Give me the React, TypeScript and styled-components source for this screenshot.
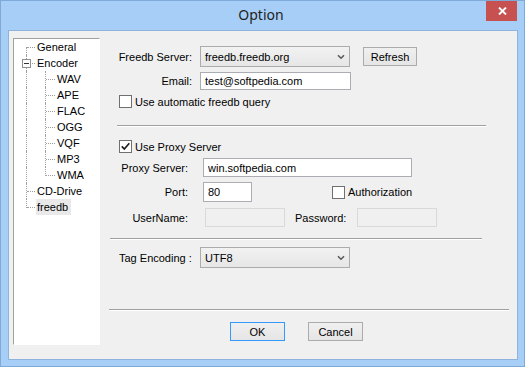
import React from 'react';
import styled, { createGlobalStyle } from 'styled-components';

const GlobalStyle = createGlobalStyle`
  html, body { margin: 0; padding: 0; }
  body {
    font-family: "Liberation Sans", Arial, sans-serif;
    font-size: 11px;
    color: #000;
    background: #fff;
  }
  * { box-sizing: border-box; }
`;

const Window = styled.div`
  width: 525px;
  height: 367px;
  background: #a6cef7;
  border: 1px solid #7faad8;
  display: flex;
  flex-direction: column;
`;

const TitleBar = styled.div`
  height: 29px;
  flex: none;
  display: grid;
  grid-template-columns: 1fr auto 1fr;
  align-items: start;
`;

const Title = styled.div`
  grid-column: 2;
  font-family: "Noto Sans", "Open Sans", sans-serif;
  font-size: 14px;
  line-height: 27px;
  color: #1e1e1e;
  margin-left: -3px;
`;

const CloseButton = styled.div`
  grid-column: 3;
  justify-self: end;
  width: 31px;
  height: 20px;
  margin-right: 7px;
  background: #c75050;
  display: flex;
  align-items: center;
  justify-content: center;
  padding-left: 2px;
`;

const Client = styled.div`
  flex: 1;
  margin: 0 6px 6px 7px;
  background: #f0f0f0;
  border: 1px solid #8fb3dd;
  display: flex;
  align-items: flex-start;
  gap: 9px;
  padding: 7px 8px 0 4px;
`;

/* ---------- Tree ---------- */

const Tree = styled.div`
  width: 87px;
  height: 307px;
  flex: none;
  background: #fff;
  border-top: 1px solid #a0a0a0;
  border-left: 1px solid #a0a0a0;
  border-right: 1px solid #fff;
  border-bottom: 1px solid #fff;
  display: flex;
  flex-direction: column;
`;

const TreeRow = styled.div`
  height: 16px;
  display: flex;
  align-items: center;
`;

type VExtent = 'full' | 'top' | 'bottom';

const Branch = styled.span<{ $w: number; $x: number; $v: VExtent; $h: boolean }>`
  position: relative;
  flex: none;
  width: ${(p) => p.$w}px;
  height: 16px;
  &::before {
    content: '';
    position: absolute;
    left: ${(p) => p.$x}px;
    top: ${(p) => (p.$v === 'bottom' ? '8px' : '0')};
    bottom: ${(p) => (p.$v === 'top' ? '7px' : '0')};
    border-left: 1px dotted #a0a0a0;
  }
  &::after {
    content: '';
    display: ${(p) => (p.$h ? 'block' : 'none')};
    position: absolute;
    left: ${(p) => p.$x + 1}px;
    right: 1px;
    top: 8px;
    border-top: 1px dotted #a0a0a0;
  }
`;

const Expander = styled.span`
  position: absolute;
  z-index: 1;
  left: 8px;
  top: 4px;
  width: 9px;
  height: 9px;
  background: #fff;
  border: 1px solid #919191;
  &::after {
    content: '';
    position: absolute;
    left: 1px;
    top: 3px;
    width: 5px;
    height: 1px;
    background: #333;
  }
`;

const TreeLabel = styled.span<{ $selected?: boolean }>`
  height: 16px;
  line-height: 16px;
  padding: 0 3px 0 1px;
  white-space: nowrap;
  background: ${(p) => (p.$selected ? '#e9e9e9' : 'transparent')};
`;

/* ---------- Right panel ---------- */

const Panel = styled.div`
  flex: 1;
  display: flex;
  flex-direction: column;
  padding-top: 8px;
`;

const FormRow = styled.div<{ $h: number; $mt: number; $pl: number }>`
  display: flex;
  align-items: center;
  height: ${(p) => p.$h}px;
  margin-top: ${(p) => p.$mt}px;
  padding-left: ${(p) => p.$pl}px;
`;

const Label = styled.span<{ $w?: number; $right?: boolean; $ml?: number }>`
  flex: none;
  width: ${(p) => (p.$w ? `${p.$w}px` : 'auto')};
  margin-left: ${(p) => p.$ml ?? 0}px;
  text-align: ${(p) => (p.$right ? 'right' : 'left')};
  white-space: nowrap;
`;

const TextBox = styled.input<{ $w: number; $h: number; $ml: number }>`
  flex: none;
  width: ${(p) => p.$w}px;
  height: ${(p) => p.$h}px;
  margin: 0 0 0 ${(p) => p.$ml}px;
  padding: 0 0 0 4px;
  font: inherit;
  color: #000;
  background: #fff;
  border: 1px solid #abadb3;
  outline: none;
  &:disabled {
    background: #f0f0f0;
    border-color: #d9d9d9;
  }
`;

const Combo = styled.div<{ $w: number; $ml: number }>`
  flex: none;
  width: ${(p) => p.$w}px;
  height: 21px;
  margin-left: ${(p) => p.$ml}px;
  padding: 0 4px 0 4px;
  background: linear-gradient(#f2f2f2, #e6e6e6);
  border: 1px solid #acacac;
  display: flex;
  align-items: center;
  justify-content: space-between;
`;

const Button = styled.button<{ $w: number; $h: number; $ml: number; $default?: boolean }>`
  flex: none;
  width: ${(p) => p.$w}px;
  height: ${(p) => p.$h}px;
  margin: 0 0 0 ${(p) => p.$ml}px;
  padding: 0;
  font: inherit;
  color: #000;
  background: linear-gradient(#f0f0f0, #e5e5e5);
  border: 1px solid ${(p) => (p.$default ? '#3399ff' : '#acacac')};
`;

const CheckLine = styled.label<{ $ml?: number }>`
  display: flex;
  align-items: center;
  gap: 3px;
  margin-left: ${(p) => p.$ml ?? 0}px;
  white-space: nowrap;
`;

const Box = styled.span`
  flex: none;
  width: 13px;
  height: 13px;
  border: 1px solid #707070;
  background: #fff;
  display: flex;
  align-items: center;
  justify-content: center;
`;

const Separator = styled.div<{ $mt: number; $ml: number; $w: number }>`
  flex: none;
  height: 2px;
  width: ${(p) => p.$w}px;
  margin-top: ${(p) => p.$mt}px;
  margin-left: ${(p) => p.$ml}px;
  border-top: 1px solid #a0a0a0;
  border-bottom: 1px solid #ffffff;
`;

const Chevron = () => (
  <svg width="8" height="6" viewBox="0 0 8 6">
    <path d="M1 1.2 L4 4.2 L7 1.2" fill="none" stroke="#5a5a5a" strokeWidth="1.6" />
  </svg>
);

const CheckBox = ({ checked, children, ml }: { checked?: boolean; children: React.ReactNode; ml?: number }) => (
  <CheckLine $ml={ml}>
    <Box>
      {checked && (
        <svg width="11" height="11" viewBox="0 0 11 11">
          <path d="M1.8 5.4 L4.3 8 L9.3 2.2" fill="none" stroke="#1f1f1f" strokeWidth="1.7" />
        </svg>
      )}
    </Box>
    <span>{children}</span>
  </CheckLine>
);

type TreeItem = {
  label: string;
  child?: boolean;
  rootV: VExtent;
  childV?: VExtent;
  expander?: boolean;
  selected?: boolean;
};

const treeItems: TreeItem[] = [
  { label: 'General', rootV: 'bottom' },
  { label: 'Encoder', rootV: 'full', expander: true },
  { label: 'WAV', child: true, rootV: 'full', childV: 'full' },
  { label: 'APE', child: true, rootV: 'full', childV: 'full' },
  { label: 'FLAC', child: true, rootV: 'full', childV: 'full' },
  { label: 'OGG', child: true, rootV: 'full', childV: 'full' },
  { label: 'VQF', child: true, rootV: 'full', childV: 'full' },
  { label: 'MP3', child: true, rootV: 'full', childV: 'full' },
  { label: 'WMA', child: true, rootV: 'full', childV: 'top' },
  { label: 'CD-Drive', rootV: 'full' },
  { label: 'freedb', rootV: 'top', selected: true },
];

export default function App() {
  return (
    <>
      <GlobalStyle />
      <Window>
        <TitleBar>
          <Title>Option</Title>
          <CloseButton>
            <svg width="9" height="8" viewBox="0 0 9 8">
              <path d="M1 0.5 L8 7.5 M8 0.5 L1 7.5" stroke="#fff" strokeWidth="1.9" />
            </svg>
          </CloseButton>
        </TitleBar>
        <Client>
          <Tree>
            {treeItems.map((it) => (
              <TreeRow key={it.label}>
                <Branch $w={22} $x={12} $v={it.rootV} $h={!it.child}>
                  {it.expander && <Expander />}
                </Branch>
                {it.child && <Branch $w={20} $x={9} $v={it.childV ?? 'full'} $h />}
                <TreeLabel $selected={it.selected}>{it.label}</TreeLabel>
              </TreeRow>
            ))}
          </Tree>

          <Panel>
            <FormRow $h={21} $mt={0} $pl={9}>
              <Label $w={74} $right>Freedb Server:</Label>
              <Combo $w={150} $ml={8}>
                <span>freedb.freedb.org</span>
                <Chevron />
              </Combo>
              <Button $w={54} $h={19} $ml={13}>Refresh</Button>
            </FormRow>
            <FormRow $h={18} $mt={5} $pl={9}>
              <Label $w={74} $right>Email:</Label>
              <TextBox $w={151} $h={18} $ml={8} readOnly value="test@softpedia.com" />
            </FormRow>
            <FormRow $h={13} $mt={5} $pl={10}>
              <CheckBox>Use automatic freedb query</CheckBox>
            </FormRow>

            <Separator $mt={17} $ml={8} $w={369} />

            <FormRow $h={13} $mt={13} $pl={10}>
              <CheckBox checked>Use Proxy Server</CheckBox>
            </FormRow>
            <FormRow $h={19} $mt={5} $pl={9}>
              <Label $w={70} $right>Proxy Server:</Label>
              <TextBox $w={209} $h={19} $ml={15} readOnly value="win.softpedia.com" />
            </FormRow>
            <FormRow $h={20} $mt={5} $pl={9}>
              <Label $w={70} $right>Port:</Label>
              <TextBox $w={49} $h={20} $ml={15} readOnly value="80" />
              <CheckBox ml={80}>Authorization</CheckBox>
            </FormRow>
            <FormRow $h={19} $mt={6} $pl={9}>
              <Label $w={70} $right>UserName:</Label>
              <TextBox $w={80} $h={19} $ml={17} disabled value="" />
              <Label $ml={10}>Password:</Label>
              <TextBox $w={80} $h={19} $ml={11} disabled value="" />
            </FormRow>

            <Separator $mt={11} $ml={1} $w={372} />

            <FormRow $h={21} $mt={7} $pl={10}>
              <Label $w={81}>Tag Encoding :</Label>
              <Combo $w={150} $ml={0}>
                <span>UTF8</span>
                <Chevron />
              </Combo>
            </FormRow>

            <Separator $mt={41} $ml={0} $w={400} />

            <FormRow $h={19} $mt={11} $pl={121}>
              <Button $w={55} $h={19} $ml={0} $default>OK</Button>
              <Button $w={55} $h={19} $ml={23}>Cancel</Button>
            </FormRow>
          </Panel>
        </Client>
      </Window>
    </>
  );
}
